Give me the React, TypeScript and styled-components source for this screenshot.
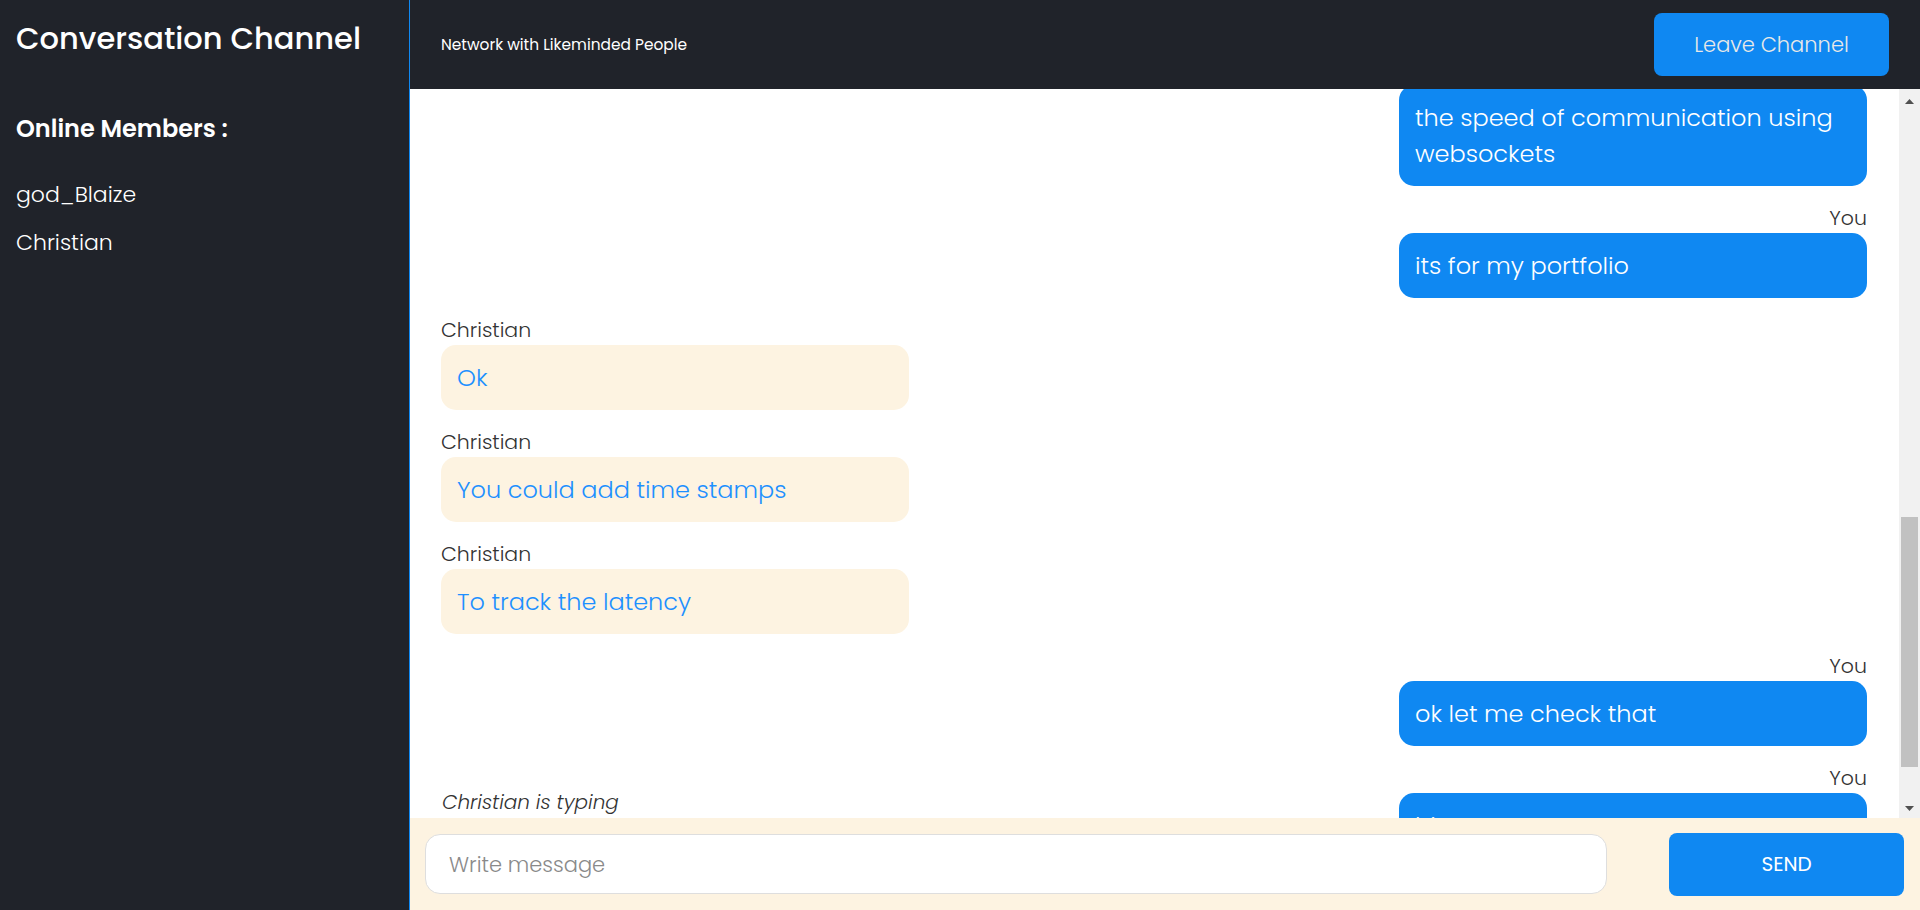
import React, { useEffect, useLayoutEffect, useRef, useState } from "react";
import styled, { createGlobalStyle } from "styled-components";

const FONT = `"Poppins", "Open Sans", sans-serif`;
const DARK = "#20232a";
const BLUE = "#0f88f2";
const CREAM = "#fdf3e1";
const ARROW = 21;

const GlobalStyle = createGlobalStyle`
  html, body { margin: 0; padding: 0; height: 100%; overflow: hidden; }
  body { font-family: ${FONT}; background: #fff; }
  #root { height: 100%; }
  *, *::before, *::after { box-sizing: border-box; }
`;

const Shell = styled.div`
  display: grid;
  grid-template-columns: 410px 1fr;
  height: 100vh;
  overflow: hidden;
`;

const Sidebar = styled.aside`
  background: ${DARK};
  border-right: 1px solid ${BLUE};
  padding: 15px 16px;
  color: #fff;
`;

const Title = styled.h1`
  margin: 0;
  font-size: 30.5px;
  font-weight: 500;
  line-height: 48px;
  white-space: nowrap;
`;

const SectionTitle = styled.h2`
  margin: 48px 0 0;
  font-size: 24px;
  font-weight: 600;
  line-height: 36px;
`;

const MemberList = styled.ul`
  list-style: none;
  margin: 24px 0 0;
  padding: 0;
`;

const Member = styled.li`
  font-size: 22px;
  font-weight: 300;
  line-height: 48px;
`;

const Main = styled.main`
  display: flex;
  flex-direction: column;
  min-width: 0;
  height: 100vh;
  overflow: hidden;
`;

const Header = styled.header`
  flex: 0 0 89px;
  background: ${DARK};
  display: flex;
  align-items: center;
  justify-content: space-between;
  padding: 0 31px;
`;

const Subtitle = styled.p`
  margin: 0;
  color: #fff;
  font-size: 15.4px;
  font-weight: 400;
`;

const PrimaryButton = styled.button<{ $size: number; $weight: number; $color: string }>`
  width: 235px;
  height: 63px;
  border: none;
  border-radius: 8px;
  background: ${BLUE};
  color: ${(p) => p.$color};
  font-family: ${FONT};
  font-size: ${(p) => p.$size}px;
  font-weight: ${(p) => p.$weight};
  cursor: pointer;
  flex: 0 0 auto;
`;

const ChatBody = styled.section`
  flex: 1 1 0;
  min-height: 0;
  position: relative;
  display: flex;
  background: #fff;
`;

const MessageList = styled.div`
  position: relative;
  flex: 1 1 auto;
  min-width: 0;
  height: 100%;
  overflow-y: auto;
  scrollbar-width: none;
  padding: 37px 32px 49px 31px;
  display: flex;
  flex-direction: column;
  gap: 17px;
  &::-webkit-scrollbar {
    display: none;
  }
`;

const ScrollRail = styled.div`
  flex: 0 0 21px;
  display: flex;
  flex-direction: column;
  background: #f1f1f1;
`;

const RailButton = styled.div`
  flex: 0 0 ${ARROW}px;
  svg {
    display: block;
  }
`;

const RailTrack = styled.div`
  flex: 1 1 auto;
  position: relative;
`;

const RailThumb = styled.div`
  position: absolute;
  left: 2px;
  right: 2px;
  background: #c1c1c1;
`;

const MessageItem = styled.div<{ $mine: boolean }>`
  display: flex;
  flex-direction: column;
  align-items: ${(p) => (p.$mine ? "flex-end" : "flex-start")};
  flex: 0 0 auto;
`;

const Sender = styled.span`
  font-size: 20.5px;
  font-weight: 300;
  line-height: 30px;
  color: #333;
`;

const Bubble = styled.div<{ $mine: boolean }>`
  width: 468px;
  padding: 14.5px 16px;
  border-radius: 15px;
  font-size: 24px;
  font-weight: 300;
  line-height: 36px;
  background: ${(p) => (p.$mine ? BLUE : CREAM)};
  color: ${(p) => (p.$mine ? "#fff" : "#1e90ff")};
`;

const Typing = styled.span`
  position: absolute;
  left: 32px;
  bottom: 1px;
  font-size: 20px;
  font-style: italic;
  font-weight: 300;
  line-height: 30px;
  color: #333;
`;

const Footer = styled.footer`
  flex: 0 0 92px;
  background: ${CREAM};
  display: flex;
  align-items: center;
  gap: 62px;
  padding: 0 16px 0 15px;
`;

const MessageInput = styled.input`
  flex: 1 1 auto;
  min-width: 0;
  height: 60px;
  border: 1px solid #dedede;
  border-radius: 15px;
  background: #fff;
  padding: 0 23px;
  font-family: ${FONT};
  font-size: 21px;
  font-weight: 300;
  color: #333;
  outline: none;
  caret-color: #000;
  &::placeholder {
    color: #8a8a8a;
  }
`;

type Msg = { from: string; text: string; anchor?: boolean };

const messages: Msg[] = [
  { from: "Christian", text: "Hey" },
  { from: "You", text: "hello" },
  { from: "Christian", text: "What are you working on?" },
  { from: "You", text: "a realtime chat app" },
  { from: "Christian", text: "Nice" },
  { from: "Christian", text: "What stack are you using?" },
  { from: "You", text: "react and node" },
  { from: "You", text: "with socket.io" },
  { from: "Christian", text: "Cool, how fast is it?" },
  { from: "You", text: "i am currently testing" },
  { from: "You", text: "the speed of communication using websockets", anchor: true },
  { from: "You", text: "its for my portfolio" },
  { from: "Christian", text: "Ok" },
  { from: "Christian", text: "You could add time stamps" },
  { from: "Christian", text: "To track the latency" },
  { from: "You", text: "ok let me check that" },
  { from: "You", text: "hi" },
];

export default function App() {
  const listRef = useRef<HTMLDivElement>(null);
  const trackRef = useRef<HTMLDivElement>(null);
  const userScrolled = useRef(false);
  const [thumb, setThumb] = useState({ top: 0, height: 0 });

  const updateThumb = () => {
    const list = listRef.current;
    const track = trackRef.current;
    if (!list || !track) return;
    const trackLen = track.clientHeight;
    const ratio = list.clientHeight / list.scrollHeight;
    const height = Math.max(20, trackLen * ratio);
    const maxScroll = list.scrollHeight - list.clientHeight;
    const top = maxScroll > 0 ? (list.scrollTop / maxScroll) * (trackLen - height) : 0;
    setThumb({ top, height });
  };

  const anchorScroll = () => {
    const list = listRef.current;
    if (!list || userScrolled.current) return;
    const anchor = list.querySelector<HTMLElement>('[data-anchor="true"]');
    if (anchor) list.scrollTop = anchor.offsetTop + 4;
  };

  const sync = () => {
    anchorScroll();
    updateThumb();
  };

  useLayoutEffect(() => {
    sync();
  }, []);

  useEffect(() => {
    const list = listRef.current;
    if (!list) return;
    const ro = new ResizeObserver(() => sync());
    ro.observe(list);
    if (list.firstElementChild) ro.observe(list.firstElementChild);
    const raf = requestAnimationFrame(() => requestAnimationFrame(sync));
    const t = window.setTimeout(sync, 200);
    const onWheel = () => {
      userScrolled.current = true;
    };
    list.addEventListener("wheel", onWheel);
    if (document.fonts && document.fonts.ready) document.fonts.ready.then(sync);
    return () => {
      ro.disconnect();
      cancelAnimationFrame(raf);
      window.clearTimeout(t);
      list.removeEventListener("wheel", onWheel);
    };
  }, []);

  return (
    <>
      <GlobalStyle />
      <Shell>
        <Sidebar>
          <Title>Conversation Channel</Title>
          <SectionTitle>Online Members :</SectionTitle>
          <MemberList>
            <Member>god_Blaize</Member>
            <Member>Christian</Member>
          </MemberList>
        </Sidebar>
        <Main>
          <Header>
            <Subtitle>Network with Likeminded People</Subtitle>
            <PrimaryButton $size={21} $weight={300} $color="#e8e8e8">
              Leave Channel
            </PrimaryButton>
          </Header>
          <ChatBody>
            <MessageList ref={listRef} onScroll={updateThumb}>
              {messages.map((m, i) => {
                const mine = m.from === "You";
                return (
                  <MessageItem key={i} $mine={mine}>
                    <Sender>{m.from}</Sender>
                    <Bubble $mine={mine} data-anchor={m.anchor ? "true" : undefined}>
                      {m.text}
                    </Bubble>
                  </MessageItem>
                );
              })}
            </MessageList>
            <ScrollRail>
              <RailButton>
                <svg width="21" height="21" viewBox="0 0 21 21">
                  <polygon points="6,15 10.5,10 15,15" fill="#505050" />
                </svg>
              </RailButton>
              <RailTrack ref={trackRef}>
                <RailThumb style={{ top: thumb.top, height: thumb.height }} />
              </RailTrack>
              <RailButton>
                <svg width="21" height="21" viewBox="0 0 21 21">
                  <polygon points="6,9 15,9 10.5,14" fill="#505050" />
                </svg>
              </RailButton>
            </ScrollRail>
            <Typing>Christian is typing</Typing>
          </ChatBody>
          <Footer>
            <MessageInput placeholder="Write message" autoFocus />
            <PrimaryButton $size={20} $weight={400} $color="#fff">
              SEND
            </PrimaryButton>
          </Footer>
        </Main>
      </Shell>
    </>
  );
}
